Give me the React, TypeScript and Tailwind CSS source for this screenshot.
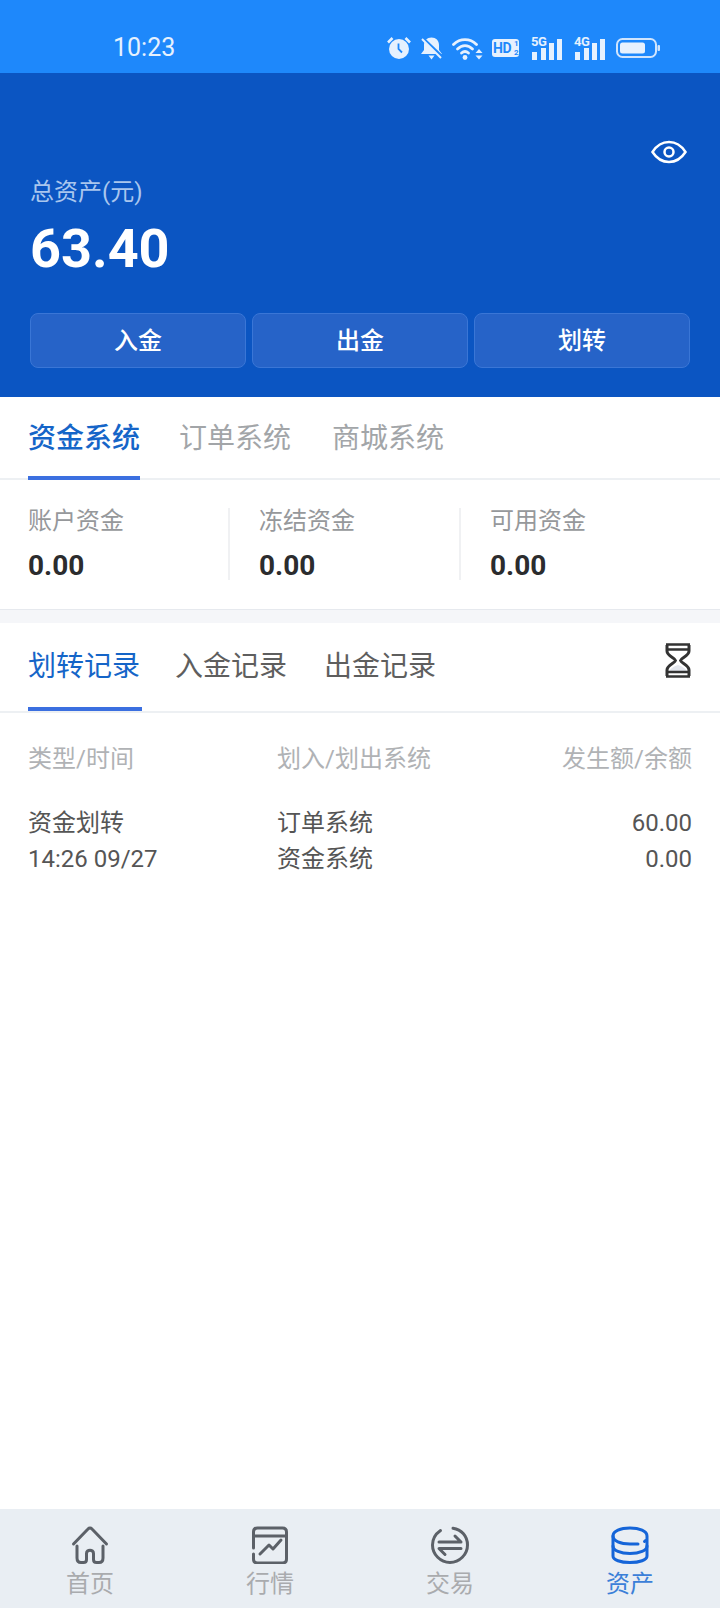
const font = "font-['Roboto','Noto_Sans_CJK_SC',sans-serif]";

function StatusIcons() {
  return (
    <div className="flex items-center text-[#e6f1fe]">
      <svg width="24" height="22" viewBox="0 0 24 22" className="mr-[9px]">
        <circle cx="12" cy="12" r="10" fill="currentColor" />
        <path d="M11.500 6.500V12l3.500 3.500" stroke="#1e88fb" strokeWidth="1.800" fill="none" />
        <path d="M1 5.500l4.500-4.500M23 5.500l-4.500-4.500" stroke="currentColor" strokeWidth="2.600" />
      </svg>
      <svg width="23" height="23" viewBox="0 0 23 23" className="mr-[9px]">
        <path d="M11.500 0.500c4.500 0 7.500 3 7.500 7.500v5l3 4H1l3-4V8c0-4.500 3-7.500 7.500-7.500z" fill="currentColor" />
        <path d="M8.500 18.500h6l-3 4z" fill="currentColor" />
        <path d="M2 0.500l20 19" stroke="#1e88fb" strokeWidth="3" />
        <path d="M2 2l19 19" stroke="currentColor" strokeWidth="2" />
      </svg>
      <svg width="31" height="23" viewBox="0 0 31 23" className="mr-[9px]">
        <g fill="none" stroke="currentColor" strokeWidth="2.800" strokeLinecap="round">
          <path d="M1.500 7.500C8 1 18 1 24.500 7.500" />
          <path d="M5.500 12c4.500-4.500 10.500-4.500 15 0" />
          <path d="M9.500 16c2.300-2 4.700-2 7 0" />
        </g>
        <circle cx="13" cy="20.500" r="2.400" fill="currentColor" />
        <path d="M27 12l3.500 4h-7zM27 22.500l3.500-4h-7z" fill="currentColor" />
      </svg>
      <div className="relative mr-[12px] flex h-[18px] w-[27px] items-center rounded-[3px] bg-[#e6f1fe] pl-[1px] text-[14px] font-bold leading-none tracking-[-0.5px] text-[#1e88fb]">
        HD
        <span className="absolute right-[1px] top-0 text-[8px] leading-[9px]">1</span>
        <span className="absolute bottom-0 right-[1px] text-[8px] leading-[9px]">2</span>
      </div>
      <Signal label="5G" className="mr-[12px]" />
      <Signal label="4G" className="mr-[11px]" />
      <svg width="44" height="20" viewBox="0 0 44 20">
        <rect x="1" y="1" width="39" height="18" rx="5.500" fill="none" stroke="#cfe4fd" strokeWidth="2" />
        <rect x="4" y="4.500" width="25" height="11" rx="2.500" fill="currentColor" />
        <rect x="41.500" y="7" width="2.500" height="6" rx="1" fill="#cfe4fd" />
      </svg>
    </div>
  );
}

function Signal({ label, className }: { label: string; className?: string }) {
  return (
    <div className={`relative h-[23px] w-[31px] ${className}`}>
      <span className="absolute left-0 top-[-1px] text-[13px] font-bold leading-[12px] tracking-[-0.5px]">{label}</span>
      <div className="absolute bottom-0 left-[1px] h-[8px] w-[5px] bg-current" />
      <div className="absolute bottom-0 left-[10px] h-[12px] w-[5px] bg-current" />
      <div className="absolute bottom-0 left-[18px] h-[17px] w-[5px] bg-current" />
      <div className="absolute bottom-0 left-[26px] h-[21px] w-[5px] bg-current" />
    </div>
  );
}

function NavIcon({ name }: { name: string }) {
  const stroke = name === "db" ? "#1565d8" : "#5c6168";
  return (
    <svg width="38" height="38" viewBox="0 0 38 38" fill="none" stroke={stroke} strokeWidth="3" strokeLinecap="round" strokeLinejoin="round">
      {name === "home" && (
        <>
          <path d="M2.500 18L17 3c1.200-1.300 2.800-1.300 4 0l14.500 15" />
          <path d="M6 20v12c0 3 1.500 4.500 4 4.500h2.500c2 0 3-1 3-3v-6c0-4.500 7-4.500 7 0v6c0 2 1 3 3 3H28c2.500 0 4-1.500 4-4.500V20" />
        </>
      )}
      {name === "chart" && (
        <>
          <path d="M2.500 22V6c0-2.500 1.500-4 4-4h25c2.500 0 4 1.500 4 4v27c0 2.500-1.500 4-4 4h-25c-2.500 0-4-1.500-4-4v-5" />
          <path d="M3 10h32" />
          <path d="M9 28l9-9 4 4 8-9" />
        </>
      )}
      {name === "swap" && (
        <>
          <path d="M22 2.200c8.500 1.300 14.500 8 14.500 16.800 0 9.500-8 17.500-17.500 17.500S1.500 28.500 1.500 19c0-6 3-11 8-14.500" />
          <path d="M8 16h22l-6-6" />
          <path d="M30 22.500H8l6 6" />
        </>
      )}
      {name === "db" && (
        <>
          <path d="M2 10c0-5 7.500-8 17-8s17 3 17 8v20c0 4-7.500 6.500-17 6.500S2 34 2 30z" />
          <path d="M2 10c0 5 7.500 8 17 8h8" />
          <path d="M33.500 15.500l1-1" />
          <path d="M2 20c0 4.500 7.500 7.500 17 7.500S36 24.500 36 20" />
        </>
      )}
    </svg>
  );
}

const headerBtn = "flex h-[55px] flex-1 items-center justify-center rounded-[8px] border border-[#3a76d6] bg-[#2663c8] text-[24px] font-medium text-white";
const rowGrid = "grid grid-cols-[249px_1fr_auto] leading-[36px]";

export default function App() {
  return (
    <div className={`flex h-[1608px] w-[720px] flex-col bg-white ${font}`}>
      <div className="flex h-[73px] items-center justify-between bg-[#1e88fb] pl-[113px] pr-[60px] pt-[23px] text-[25px] text-[#e6f1fe]">
        <span>10:23</span>
        <StatusIcons />
      </div>

      <div className="relative h-[324px] bg-[#0b55c2] px-[30px] pt-[103px]">
        <svg width="36" height="24" viewBox="0 0 36 24" fill="none" stroke="white" strokeWidth="2.500" className="absolute right-[33px] top-[67px]">
          <path d="M1.500 12C6 5 11.500 2 18 2s12 3 16.500 10C30 19 24.500 22 18 22S6 19 1.500 12z" />
          <circle cx="18" cy="12" r="4.500" />
        </svg>
        <div className="text-[24px] leading-[32px] text-[#a9c6ee]">总资产(元)</div>
        <div className="mt-[8px] text-[54px] font-bold leading-[66px] text-white">63.40</div>
        <div className="mt-[31px] flex gap-[6px]">
          <div className={headerBtn}>入金</div>
          <div className={headerBtn}>出金</div>
          <div className={headerBtn}>划转</div>
        </div>
      </div>

      <div className="flex h-[83px] border-b-2 border-[#edf0f3] px-[28px] text-[28px] text-[#a2a5a8]">
        <div className="flex h-[83px] w-[112px] items-center justify-center border-b-4 border-[#3b6fe0] pt-[4px] font-medium text-[#1565c8]">资金系统</div>
        <div className="ml-[39px] flex h-[83px] items-center">订单系统</div>
        <div className="ml-[41px] flex h-[83px] items-center">商城系统</div>
      </div>

      <div className="flex h-[130px] border-b border-[#e6e9ee] px-[28px] pt-[28px]">
        {["账户资金", "冻结资金", "可用资金"].map((label, i) => (
          <div key={label} className={i === 2 ? "h-[72px]" : "mr-[29px] h-[72px] w-[202px] border-r-2 border-[#f0f1f3]"}>
            <div className="text-[24px] leading-[26px] text-[#96989b]">{label}</div>
            <div className="mt-[16px] text-[28px] font-bold leading-[32px] text-[#2b2c2e]">0.00</div>
          </div>
        ))}
      </div>

      <div className="h-[13px] bg-[#f5f6f9]" />

      <div className="relative flex h-[90px] border-b-2 border-[#edf0f3] pl-[28px] text-[28px] text-[#5e5e5e]">
        <div className="flex h-[88px] w-[114px] items-center border-b-4 border-[#3b6fe0] pt-[4px] text-[#1565c8]">划转记录</div>
        <div className="ml-[33px] flex h-[88px] items-center">入金记录</div>
        <div className="ml-[37px] flex h-[88px] items-center">出金记录</div>
        <svg width="28" height="35" viewBox="0 0 28 35" fill="none" stroke="#333" strokeWidth="3" strokeLinejoin="round" className="absolute right-[28px] top-[20px]">
          <path d="M5 29c0-3 6-6 9-7 3 1 9 4 9 7z" fill="#e4e7ee" stroke="none" />
          <path d="M2 1.500h24M3 6.500h22M3 29h22M2 33.500h24" strokeWidth="2.500" />
          <path d="M3 2v6c0 5 8 7 8.500 9.500C11 20 3 22 3 27v6M25 2v6c0 5-8 7-8.500 9.500.5 2.500 8.500 4.500 8.500 9.500v6" />
        </svg>
      </div>

      <div className="flex-1 px-[28px] pt-[28px] text-[24px]">
        <div className={`${rowGrid} text-[#b0b2b5]`}>
          <span>类型/时间</span>
          <span>划入/划出系统</span>
          <span>发生额/余额</span>
        </div>
        <div className={`${rowGrid} mt-[28px] text-[#555]`}>
          <span>资金划转</span>
          <span>订单系统</span>
          <span className="text-right">60.00</span>
          <span>14:26 09/27</span>
          <span>资金系统</span>
          <span className="text-right">0.00</span>
        </div>
      </div>

      <div className="grid h-[99px] grid-cols-4 bg-[#e9eef3] pt-[17px]">
        {[
          { name: "home", label: "首页" },
          { name: "chart", label: "行情" },
          { name: "swap", label: "交易" },
          { name: "db", label: "资产" },
        ].map((item) => (
          <div key={item.name} className="flex flex-col items-center">
            <NavIcon name={item.name} />
            <span className={`mt-[6px] text-[24px] leading-[28px] ${item.name === "db" ? "text-[#3b80d8]" : "text-[#a9abae]"}`}>{item.label}</span>
          </div>
        ))}
      </div>
    </div>
  );
}
